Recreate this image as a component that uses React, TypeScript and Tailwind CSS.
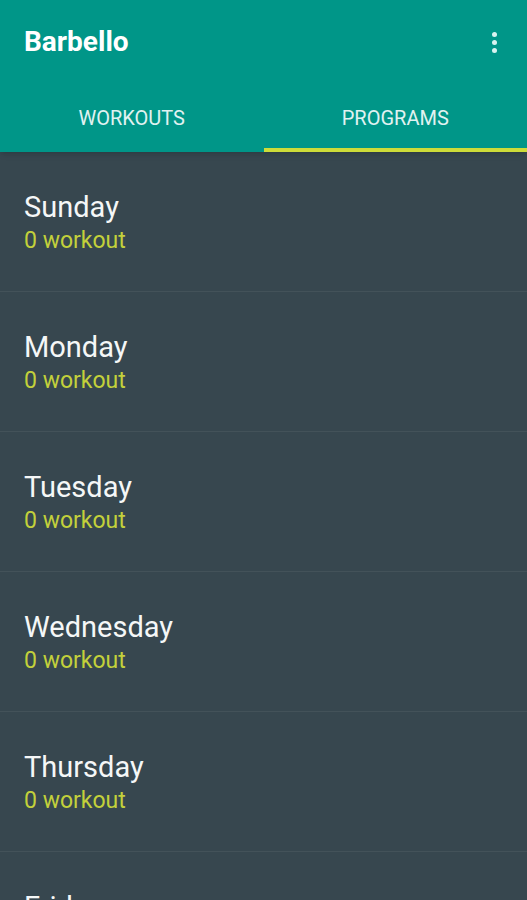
const days = ["Sunday", "Monday", "Tuesday", "Wednesday", "Thursday", "Friday"];

export default function App() {
  return (
    <div className="h-[900px] w-full overflow-hidden bg-[#37474f] font-['Roboto',sans-serif]">
      <header className="bg-[#009688] shadow-md">
        <div className="flex h-[84px] items-center justify-between pl-6 pr-[30px]">
          <h1 className="text-[28px] font-bold text-white">Barbello</h1>
          <div className="flex flex-col gap-[3px]">
            <span className="h-[5px] w-[5px] rounded-full bg-[#d8f3f0]" />
            <span className="h-[5px] w-[5px] rounded-full bg-[#d8f3f0]" />
            <span className="h-[5px] w-[5px] rounded-full bg-[#d8f3f0]" />
          </div>
        </div>
        <div className="flex h-[68px]">
          <div className="flex w-1/2 flex-col">
            <div className="flex flex-1 items-center justify-center pt-1 text-[20px] text-[#e0f2f1]">
              WORKOUTS
            </div>
            <div className="h-[4px]" />
          </div>
          <div className="flex w-1/2 flex-col">
            <div className="flex flex-1 items-center justify-center pt-1 text-[20px] text-[#e0f2f1]">
              PROGRAMS
            </div>
            <div className="h-[4px] bg-[#cddc39]" />
          </div>
        </div>
      </header>
      <ul>
        {days.map((day) => (
          <li
            key={day}
            className="flex h-[140px] flex-col justify-center border-b border-[#435259] pl-6 pt-[3px]"
          >
            <span className="text-[29px] leading-[36px] text-[#f5f7f7]">{day}</span>
            <span className="text-[23px] leading-[32px] text-[#c3d13b]">0 workout</span>
          </li>
        ))}
      </ul>
    </div>
  );
}
